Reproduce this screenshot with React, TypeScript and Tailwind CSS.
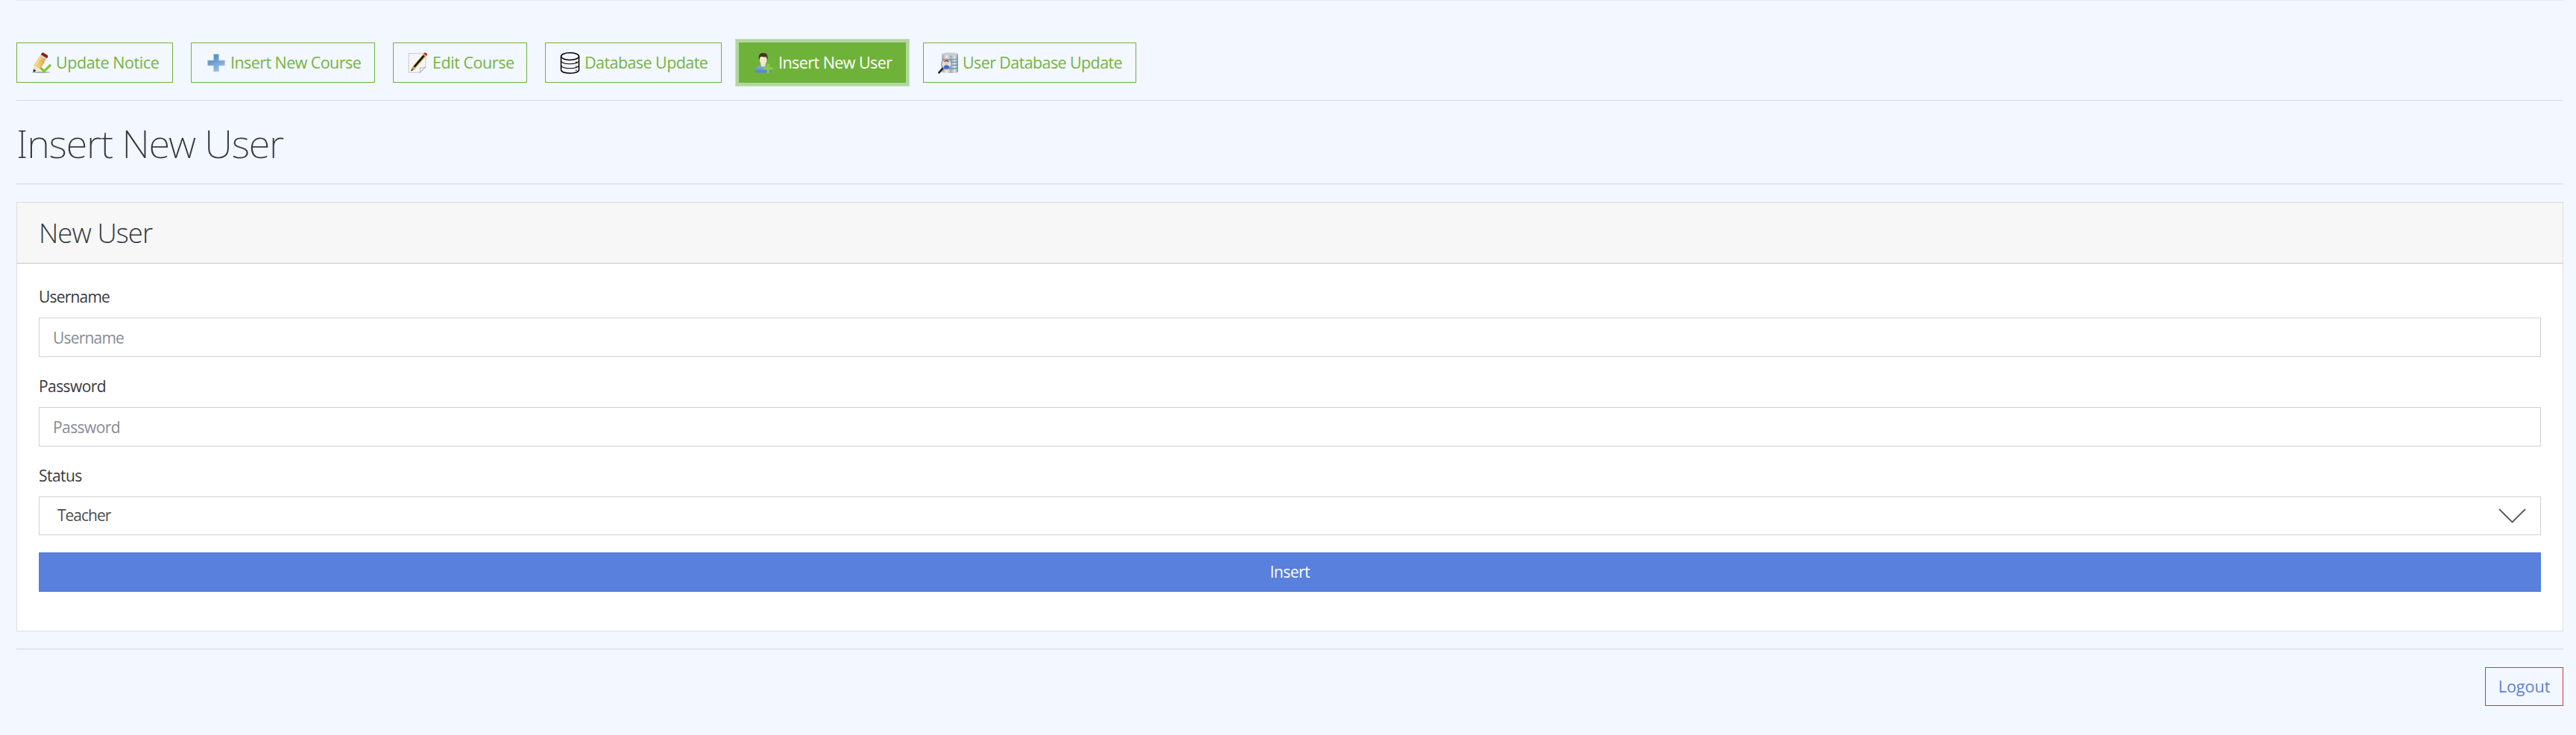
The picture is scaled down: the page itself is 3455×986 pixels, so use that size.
import type { ReactNode } from "react";

const iconClass = "block h-[29px] w-[27px] shrink-0";

function PencilCheckIcon() {
  return (
    <svg viewBox="0 0 27 29" className={iconClass}>
      <defs>
        <linearGradient id="wood" x1="0" y1="0" x2="1" y2="0.5">
          <stop offset="0" stopColor="#e3b04c" />
          <stop offset="0.45" stopColor="#f6d98c" />
          <stop offset="1" stopColor="#cf9430" />
        </linearGradient>
      </defs>
      <ellipse cx="13" cy="27" rx="12.5" ry="1.2" fill="#8f9498" opacity="0.7" />
      <path d="M3.3 18 12 3.8 20.4 8.6 12 22.5 7.5 25 3 26.4Z" fill="url(#wood)" />
      <path d="M3.3 18 6.2 18.2 7.6 20.5 10.6 21 11.7 22.6 3 26.8Z" fill="#f5e6c8" />
      <path d="M3 22.5 6.3 24.8 2.6 27Z" fill="#16181a" />
      <path d="m13 2.7 8.4 5-1.5 2.4-8.4-5Z" fill="#d7d3cf" />
      <path d="M13.6 1.7Q15 0 16.6.9l5 3Q22.8 5 22 6.6l-.9 1.6-8.2-5Z" fill="#8c1d1f" />
      <path d="m9 9 7.8 4.6M7 20l8.2-13.4" stroke="#c98b2b" strokeWidth="0.6" opacity="0.5" />
      <path d="m12.5 21.2 4.8 4.4L26 16.8" fill="none" stroke="#80c928" strokeWidth="3.2" />
    </svg>
  );
}

function PlusIcon() {
  return (
    <svg viewBox="0 0 27 29" className={iconClass}>
      <defs>
        <linearGradient id="plus" x1="0" y1="0" x2="0.5" y2="1">
          <stop offset="0" stopColor="#4f80b5" />
          <stop offset="0.5" stopColor="#6d9dce" />
          <stop offset="1" stopColor="#94bfea" />
        </linearGradient>
      </defs>
      <path d="M10.500 2.800h7v8.200h8v7h-8v8h-7v-8h-8v-7h8Z" fill="url(#plus)" stroke="#b4cde8" strokeWidth="0.5" />
    </svg>
  );
}

function NotePencilIcon() {
  return (
    <svg viewBox="0 0 27 29" className={iconClass}>
      <path d="M1.200 1.700h22.600v18.200l-7.200 7.400H1.200Z" fill="#f5f5f5" stroke="#c8cbce" />
      <path d="M16 27.300c1-2.600 1-4.800.4-6.600 2.700.8 5 .4 7.400-.8Z" fill="#fff" stroke="#a3a6a9" strokeWidth="0.9" />
      <path d="m4.800 24.800 2-6L21 2l4 3.200L10.200 21.800Z" fill="#eac052" />
      <path d="m8.500 19.800 14-16.200" stroke="#17191b" strokeWidth="2.800" />
      <path d="m4.300 25.200 1.800-5.500 3.800 3Z" fill="#b98d57" />
      <path d="m4.200 25.400 1-2.800 1.800 1.500Z" fill="#222" />
      <path d="m20.600 2.600 3.800 3.200" stroke="#d7c9a0" strokeWidth="1.500" />
      <path d="M21 1.900q1.600-2.300 3.600-1 2.300 1.500.5 4.300Z" fill="#c92b25" />
    </svg>
  );
}

function DatabaseIcon() {
  return (
    <svg viewBox="0 0 27 29" className={iconClass} fill="none" stroke="#000" strokeWidth="1.5">
      <ellipse cx="13.5" cy="5.6" rx="12" ry="4.8" />
      <path d="M1.5 5.6v18c0 2.800 5 4.600 12 4.600s12-1.800 12-4.600v-18" />
      <path d="M1.500 12c1.200 2.400 5.800 3.800 12 3.800s10.800-1.400 12-3.800" strokeWidth="1.100" />
      <path d="M1.500 18c1.200 2.400 5.800 3.800 12 3.800s10.800-1.400 12-3.800" strokeWidth="1.100" />
      <path d="M21.700 12.700v1.200M21.700 18.400v1.200M21.700 23.800V25" />
    </svg>
  );
}

function UserAddIcon() {
  return (
    <svg viewBox="0 0 27 29" className={iconClass}>
      <defs>
        <linearGradient id="shirt" x1="0" y1="0" x2="0" y2="1">
          <stop offset="0" stopColor="#86b1dc" />
          <stop offset="1" stopColor="#4d84bb" />
        </linearGradient>
      </defs>
      <ellipse cx="13" cy="27.2" rx="12" ry="1.2" fill="#7f9a8a" opacity="0.7" />
      <path d="M1.400 26.200c0-5 3-7.500 8-8.400h6.400c5 .9 8 3.400 8 8.400-4 1.800-18 1.800-22.400 0Z" fill="url(#shirt)" />
      <path d="M9.400 15h6.400v2.800q-3.200 4-6.400 0Z" fill="#eadfcb" />
      <ellipse cx="12.600" cy="10.200" rx="4.700" ry="6.700" fill="#f4e7d3" />
      <path d="M7.300 10.500C5.800 3.800 8 1 12.600 1s7 2.800 5.500 9.500l-1.200-4c-3 .4-6-.6-7.500-.5-1 .2-1.400 2.500-2.100 4.500Z" fill="#4b3027" />
      <path d="M17.600 15.400h3.200v4.800h4.800v3.200h-4.800v4.800h-3.200v-4.800h-4.800v-3.200h4.800Z" fill="#8acb3a" />
    </svg>
  );
}

function UserSearchDatabaseIcon() {
  return (
    <svg viewBox="0 0 27 29" className={iconClass}>
      <defs>
        <linearGradient id="steel" x1="0" y1="0" x2="1" y2="0">
          <stop offset="0" stopColor="#9fa3a7" />
          <stop offset="0.3" stopColor="#eceeef" />
          <stop offset="0.55" stopColor="#a9adb1" />
          <stop offset="0.8" stopColor="#dfe1e3" />
          <stop offset="1" stopColor="#8c9094" />
        </linearGradient>
      </defs>
      <path d="M5.400 2.500v24c1 2 20.600 2 21.600 0v-24Z" fill="url(#steel)" />
      <ellipse cx="16.200" cy="2.500" rx="10.800" ry="2" fill="#c9ccd0" />
      <path d="M6 9q10 2 20.500 0M15 13.200q6 .6 11.500-.4M17 17.400q5 .4 9.500-.5M15 22q6 .5 11.500-.6" fill="none" stroke="#4b8fc6" strokeWidth="1.200" />
      <path d="m7 21-5.500 6.400" stroke="#2b2d2f" strokeWidth="2.800" strokeLinecap="round" />
      <circle cx="11.500" cy="16" r="6.800" fill="#d9e3ef" stroke="#94999e" strokeWidth="1.400" />
      <path d="M7.500 21c.2-2.600 1.600-3.600 4-3.800 2.800.2 3.800 1.400 4 3.800q-4 2.400-8 0Z" fill="#3b6cc4" />
      <circle cx="11.500" cy="14" r="3" fill="#f1cdb4" />
      <path d="M8.400 13.800q-.2-3.600 3.100-3.600t3.100 3.400q-2.500-1.800-4.700-1.200Z" fill="#8a4b34" />
    </svg>
  );
}

type NavButtonProps = { icon: ReactNode; label: string; className: string; active?: boolean };

function NavButton({ icon, label, className, active }: NavButtonProps) {
  const tone = active
    ? "border-[#6fb23a] bg-[#6fb23a] text-white shadow-[0_0_0_4px_#b1d79e,0_0_0_5px_#c6e2ba]"
    : "border-[#6fb33b] text-[#74b443]";
  return (
    <button
      className={`flex h-[54px] shrink-0 items-center gap-[6px] whitespace-nowrap border pl-[19px] text-[21.5px] ${tone} ${className}`}
    >
      {icon}
      <span>{label}</span>
    </button>
  );
}

function Field({ label, labelClass, children }: { label: string; labelClass: string; children: ReactNode }) {
  return (
    <div className="mb-[23px]">
      <label className={`mb-[11px] block h-[33px] text-[21px] leading-[33px] ${labelClass}`}>{label}</label>
      {children}
    </div>
  );
}

const inputClass =
  "block h-[53px] w-full border border-[#ced1d8] bg-white pl-[18px] text-[21px] placeholder:text-[#878c94] placeholder:opacity-100 outline-none";

export default function App() {
  return (
    <div className="h-[986px] bg-[#f3f7ff] pl-[22px] pr-[17px] font-['Open_Sans','Noto_Sans',sans-serif] text-[#373a3c]">
      <div className="h-px bg-[#e8eaee]" />

      <nav className="flex pt-[56px]">
        <NavButton icon={<PencilCheckIcon />} label="Update Notice" className="w-[210px] tracking-[-0.42px]" />
        <NavButton icon={<PlusIcon />} label="Insert New Course" className="ml-[24px] w-[247px] tracking-[-0.57px]" />
        <NavButton icon={<NotePencilIcon />} label="Edit Course" className="ml-[24px] w-[180px] tracking-[-0.45px]" />
        <NavButton icon={<DatabaseIcon />} label="Database Update" className="ml-[24px] w-[237px] tracking-[-0.57px]" />
        <NavButton icon={<UserAddIcon />} label="Insert New User" className="ml-[23px] w-[224px] tracking-[-0.55px]" active />
        <NavButton icon={<UserSearchDatabaseIcon />} label="User Database Update" className="ml-[23px] w-[286px] tracking-[-0.61px]" />
      </nav>

      <div className="mt-[23px] h-px bg-[#dadfe1]" />
      <h1 className="h-[111px] pt-px font-['Noto_Sans','Open_Sans',sans-serif] text-[52.5px] font-extralight leading-[111px] tracking-[-1.2px]">
        Insert New User
      </h1>
      <div className="h-[2px] border-t border-[#dadee1] bg-[#e9edf0]" />

      <section className="mt-[23px] h-[576px] border border-[#dbdddf] bg-white">
        <header className="h-[82px] border-b border-[#d5d5d6] bg-[#f7f7f7] pl-[29px] text-[36.5px] font-light leading-[81px] tracking-[-0.95px] shadow-[inset_0_-1px_0_#e9e9e9]">
          New User
        </header>
        <form className="px-[29px] pt-[28px]" onSubmit={(e) => e.preventDefault()}>
          <Field label="Username" labelClass="tracking-[-0.8px]">
            <input className={`${inputClass} tracking-[-0.8px]`} placeholder="Username" />
          </Field>
          <Field label="Password" labelClass="tracking-[-0.58px]">
            <input className={`${inputClass} tracking-[-0.58px]`} type="password" placeholder="Password" />
          </Field>
          <Field label="Status" labelClass="tracking-[-0.55px]">
            <div className="flex h-[52px] items-center justify-between border border-[#ced1d5] pl-[24px] pr-[19px] text-[21px] tracking-[-1px] text-[#4a4d52]">
              <span>Teacher</span>
              <svg viewBox="0 0 37 20" className="block h-[20px] w-[37px]" fill="none" stroke="#55585c" strokeWidth="1.8">
                <path d="m1 1 17.500 17.500L36 1" />
              </svg>
            </div>
          </Field>
          <button className="block h-[53px] w-full bg-[#5880dc] text-[21px] tracking-[-0.5px] text-white">Insert</button>
        </form>
      </section>

      <div className="mt-[23px] h-[2px] border-t border-[#dadee1] bg-[#e9edf0]" />
      <div className="mt-[23px] flex justify-end">
        <button className="flex h-[52px] w-[105px] items-center justify-center border border-[#dc3045] text-[21.5px] text-[#5c80dc]">
          Logout
        </button>
      </div>
    </div>
  );
}
